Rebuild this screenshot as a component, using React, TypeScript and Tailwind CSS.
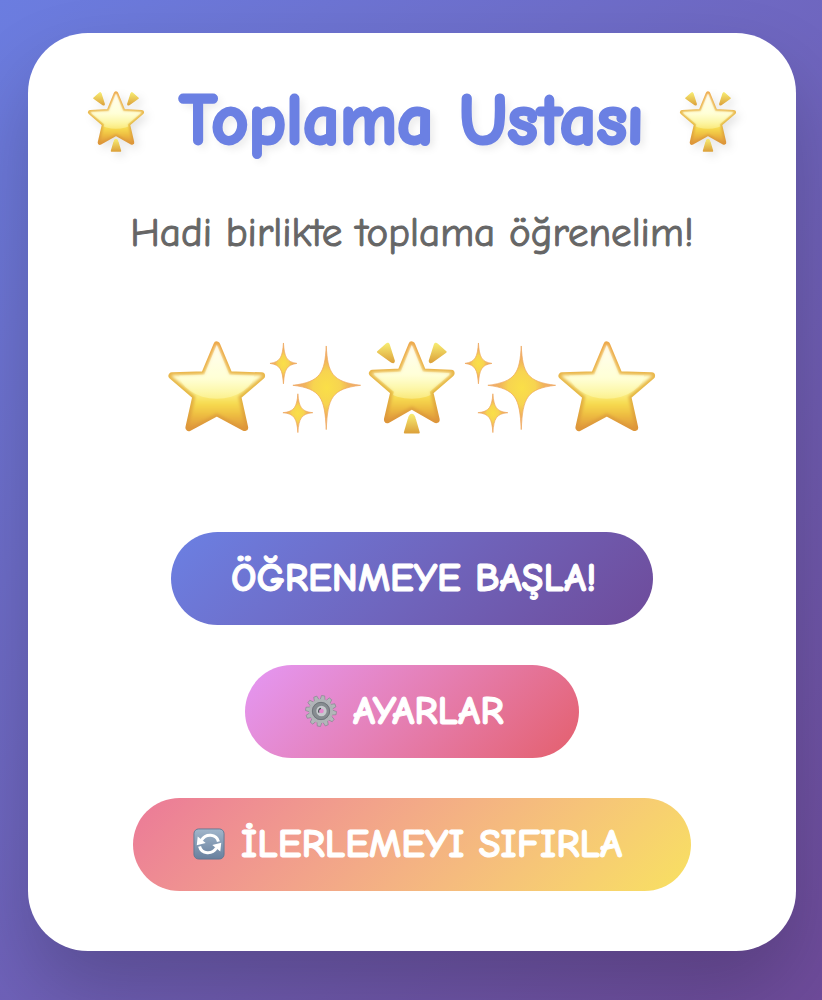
import { useId, type ReactNode } from 'react'

function StarFill({ id }: { id: string }) {
  return (
    <defs>
      <linearGradient id={`${id}-body`} x1="0" y1="0" x2="0" y2="1">
        <stop offset="0" stopColor="#fffbd8" />
        <stop offset="0.4" stopColor="#ffffd4" />
        <stop offset="0.58" stopColor="#fbf08a" />
        <stop offset="0.7" stopColor="#f7dc52" />
        <stop offset="0.82" stopColor="#f0c343" />
        <stop offset="1" stopColor="#e0983a" />
      </linearGradient>
      <linearGradient id={`${id}-edge`} x1="0" y1="0" x2="0" y2="1">
        <stop offset="0" stopColor="#eda848" />
        <stop offset="0.4" stopColor="#e9b84a" />
        <stop offset="0.6" stopColor="#e5b843" />
        <stop offset="1" stopColor="#dd963a" />
      </linearGradient>
      <linearGradient id={`${id}-gloss`} x1="0" y1="0" x2="0" y2="1">
        <stop offset="0" stopColor="#fff" stopOpacity="0.7" />
        <stop offset="1" stopColor="#ffffc0" stopOpacity="0.4" />
      </linearGradient>
      <linearGradient id={`${id}-ray`} x1="0" y1="0" x2="0" y2="1">
        <stop offset="0" stopColor="#f6ea70" />
        <stop offset="1" stopColor="#dda33c" />
      </linearGradient>
      <filter id={`${id}-soft`} x="-10%" y="-10%" width="120%" height="120%">
        <feGaussianBlur stdDeviation="1.8" />
      </filter>
    </defs>
  )
}

function StarBody({ id, d }: { id: string; d: string }) {
  return (
    <>
      <clipPath id={`${id}-clip`}>
        <path d={d} />
      </clipPath>
      <path d={d} fill={`url(#${id}-edge)`} stroke={`url(#${id}-edge)`} strokeWidth="7" strokeLinejoin="round" />
      <path d={d} fill={`url(#${id}-body)`} stroke={`url(#${id}-body)`} strokeWidth="1" strokeLinejoin="round" filter={`url(#${id}-soft)`} />
      <ellipse cx="49" cy="34" rx="38" ry="27" fill={`url(#${id}-gloss)`} clipPath={`url(#${id}-clip)`} />
    </>
  )
}

function Star({ className }: { className: string }) {
  const id = useId()
  return (
    <svg viewBox="0 0 98 98" className={className} aria-hidden="true">
      <StarFill id={id} />
      <StarBody id={id} d="M49 7 L61.5 37 L94 38 L70 58.5 L77 90 L49 75 L21 90 L28 58.5 L4 38 L36.5 37Z" />
    </svg>
  )
}

function GlowingStar({ className }: { className: string }) {
  const id = useId()
  return (
    <svg viewBox="0 0 98 98" className={className} aria-hidden="true">
      <StarFill id={id} />
      <StarBody id={id} d="M49 7 L60 34 L88.5 35.5 L67 54 L73.5 82 L49 68 L24.5 82 L31 54 L9.5 35.5 L38 34Z" />
      <g fill={`url(#${id}-ray)`} stroke={`url(#${id}-ray)`} strokeWidth="2" strokeLinejoin="round">
        <path d="M15 14 L24 6 Q25 5 26 7 L31 23 Q31 25 29 24Z" />
        <path d="M83 14 L74 6 Q73 5 72 7 L67 23 Q67 25 69 24Z" />
        <path d="M49 77 Q51 77 52 81 L56 95 L42 95 L46 81 Q47 77 49 77Z" />
      </g>
    </svg>
  )
}

function Sparkles({ className }: { className: string }) {
  const id = useId()
  return (
    <svg viewBox="0 0 98 98" className={className} aria-hidden="true">
      <defs>
        <radialGradient id={id}>
          <stop offset="0" stopColor="#fadf48" />
          <stop offset="0.4" stopColor="#f7d450" />
          <stop offset="0.65" stopColor="#f1b45c" />
          <stop offset="1" stopColor="#f0a57c" />
        </radialGradient>
      </defs>
      <g fill={`url(#${id})`} stroke="#eda55a" strokeWidth="0.7" strokeLinejoin="round">
        <path d="M60.5 8 C62 35 66 44 95 47.500 C66 51 62 60 60.5 92 C59 60 55 51 27 47.500 C55 44 59 35 60.5 8Z" />
        <path d="M17.5 5 C18.5 19 20.500 24 31 25.500 C20.500 27 18.5 32 17.5 46 C16.5 32 14.500 27 4 25.500 C14.500 24 16.5 19 17.5 5Z" />
        <path d="M32 56 C33 69 35.500 74 47 75 C35.500 76 33 81 32 95 C31 81 28.500 76 17 75 C28.500 74 31 69 32 56Z" />
      </g>
    </svg>
  )
}

function Gear() {
  return (
    <svg viewBox="0 0 34 34" className="size-8 shrink-0" aria-hidden="true">
      <g fill="#b3b7ba" stroke="#7c8387" strokeWidth="0.6">
        {[8, 38, 68, 98, 128, 158, 188, 218, 248, 278, 308, 338].map((a) => (
          <path key={a} d="M14.2 6 L15.3 0.6 H18.7 L19.8 6Z" transform={`rotate(${a} 17 17)`} />
        ))}
      </g>
      <circle cx="17" cy="17" r="11" fill="none" stroke="#b0b4b7" strokeWidth="3.4" />
      <circle cx="17" cy="17" r="6.6" fill="none" stroke="#868c90" strokeWidth="6" />
      <circle cx="17" cy="17" r="9.2" fill="none" stroke="#6c7377" strokeWidth="1" />
      <circle cx="17.5" cy="17" r="4" fill="none" stroke="#c6cacd" strokeWidth="3" />
      <path d="M14.9 18.8 A3 3 0 0 1 17 14.2" fill="none" stroke="#4b5156" strokeWidth="1.2" />
    </svg>
  )
}

function Refresh() {
  const id = useId()
  return (
    <svg viewBox="0 0 34 34" className="size-8 shrink-0" aria-hidden="true">
      <defs>
        <linearGradient id={id} x1="0" y1="0" x2="0" y2="1">
          <stop offset="0" stopColor="#a1b6cb" />
          <stop offset="1" stopColor="#68809e" />
        </linearGradient>
      </defs>
      <rect x="1" y="1" width="32" height="32" rx="5" fill={`url(#${id})`} stroke="#617792" strokeWidth="1" />
      <g fill="none" stroke="#fff" strokeWidth="3.2">
        <path d="M27 14.5 C25 6 13.5 5.5 9 13" />
        <path d="M7 19.5 C9 28 20.5 28.5 25 21" />
      </g>
      <path d="M5 9 L4 18.2 L13.5 16Z M29 25 L30 15.8 L20.5 18Z" fill="#fff" />
    </svg>
  )
}

function PillButton({ className, children }: { className: string; children: ReactNode }) {
  return (
    <button
      type="button"
      className={`flex h-[93px] max-w-full items-center gap-4 rounded-full px-[60px] text-[40px] font-bold whitespace-nowrap text-white [-webkit-text-stroke:1px_currentColor] ${className}`}
    >
      {children}
    </button>
  )
}

export default function App() {
  return (
    <div className="flex min-h-screen items-start justify-center bg-linear-135 from-[#6b7de0] to-[#6e4b9a] pt-[33px] pr-[26px] pb-12 pl-7 font-['Comic_Sans_MS','Comic_Neue','Open_Sans',sans-serif]">
      <main className="flex w-full max-w-3xl flex-col items-center rounded-[60px] bg-white px-14 pt-14 pb-[60px] shadow-[0_40px_80px_rgba(0,0,0,0.2)]">
        <h1 className="flex w-full items-center justify-between text-[72px] leading-[56px] font-bold whitespace-nowrap text-[#6b80e3] text-shadow-[4px_4px_8px_rgba(0,0,0,0.1)] [-webkit-text-stroke:3px_currentColor]">
          <GlowingStar className="size-16 drop-shadow-[4px_4px_4px_rgba(0,0,0,0.1)]" />
          <span>Toplama Ustası</span>
          <GlowingStar className="size-16 drop-shadow-[4px_4px_4px_rgba(0,0,0,0.1)]" />
        </h1>
        <p className="mt-[52px] text-[41px] leading-[56px] whitespace-nowrap text-[#666] [-webkit-text-stroke:1px_currentColor]">
          Hadi birlikte toplama öğrenelim!
        </p>
        <div className="mt-[77px] flex w-[488px] max-w-full">
          <Star className="min-w-0 flex-1" />
          <Sparkles className="min-w-0 flex-1" />
          <GlowingStar className="min-w-0 flex-1" />
          <Sparkles className="min-w-0 flex-1" />
          <Star className="min-w-0 flex-1" />
        </div>
        <div className="mt-24 flex w-full flex-col items-center gap-10">
          <PillButton className="w-[482px] bg-linear-135 from-[#6b80e3] to-[#6e4b9a]">ÖĞRENMEYE BAŞLA!</PillButton>
          <PillButton className="w-[334px] bg-linear-135 from-[#e497f5] to-[#e45f6c]">
            <Gear />
            AYARLAR
          </PillButton>
          <PillButton className="w-[558px] bg-linear-135 from-[#eb7998] to-[#f8e160]">
            <Refresh />
            İLERLEMEYI SIFIRLA
          </PillButton>
        </div>
      </main>
    </div>
  )
}
